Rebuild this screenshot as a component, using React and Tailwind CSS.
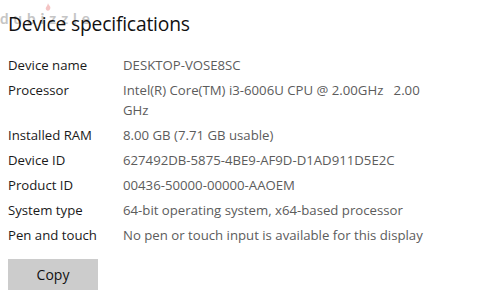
import React from 'react';

const specs = [
  ['Device name', 'DESKTOP-VOSE8SC'],
  ['Processor', 'Intel(R) Core(TM) i3-6006U CPU @ 2.00GHz   2.00 GHz'],
  ['Installed RAM', '8.00 GB (7.71 GB usable)'],
  ['Device ID', '627492DB-5875-4BE9-AF9D-D1AD911D5E2C'],
  ['Product ID', '00436-50000-00000-AAOEM'],
  ['System type', '64-bit operating system, x64-based processor'],
  ['Pen and touch', 'No pen or touch input is available for this display'],
];

export default function App() {
  return (
    <div className="relative w-[477px] h-[303px] bg-white overflow-hidden font-['Open_Sans',sans-serif]">
      {/* watermark */}
      <div className="absolute left-0 top-[11px] select-none pointer-events-none">
        <div className="relative text-[15px] font-bold tracking-[5px] leading-none text-[#a0a0a0] opacity-60 font-['Lato',sans-serif]">
          dubizzle
          <svg className="absolute left-[45px] top-[-8px]" width="6" height="8" viewBox="0 0 8 10">
            <path d="M4 0 C5 3 8 4 7 7 C6.5 9 5 10 4 10 C2 10 1 8.5 1 7 C1 5 3 4 4 0 Z" fill="#e25b5b" opacity="0.6" />
          </svg>
        </div>
      </div>

      <div className="relative px-2 pt-[11px]">
        <h1 className="text-[19.3px] leading-[26px] text-[#111] font-normal tracking-[-0.2px]">Device specifications</h1>

        <div className="mt-[18px] flex flex-col gap-[5px] text-[13.2px] leading-[20px]">
          {specs.map(([label, value]) => (
            <div key={label} className="flex">
              <div className="w-[115px] shrink-0 text-[#1a1a1a]">{label}</div>
              <div className="w-[310px] text-[#5c5c5c] whitespace-pre-wrap">{value}</div>
            </div>
          ))}
        </div>

        <button className="mt-[14px] w-[90px] h-[31px] bg-[#cccccc] text-[14px] text-[#111]">Copy</button>
      </div>
    </div>
  );
}
